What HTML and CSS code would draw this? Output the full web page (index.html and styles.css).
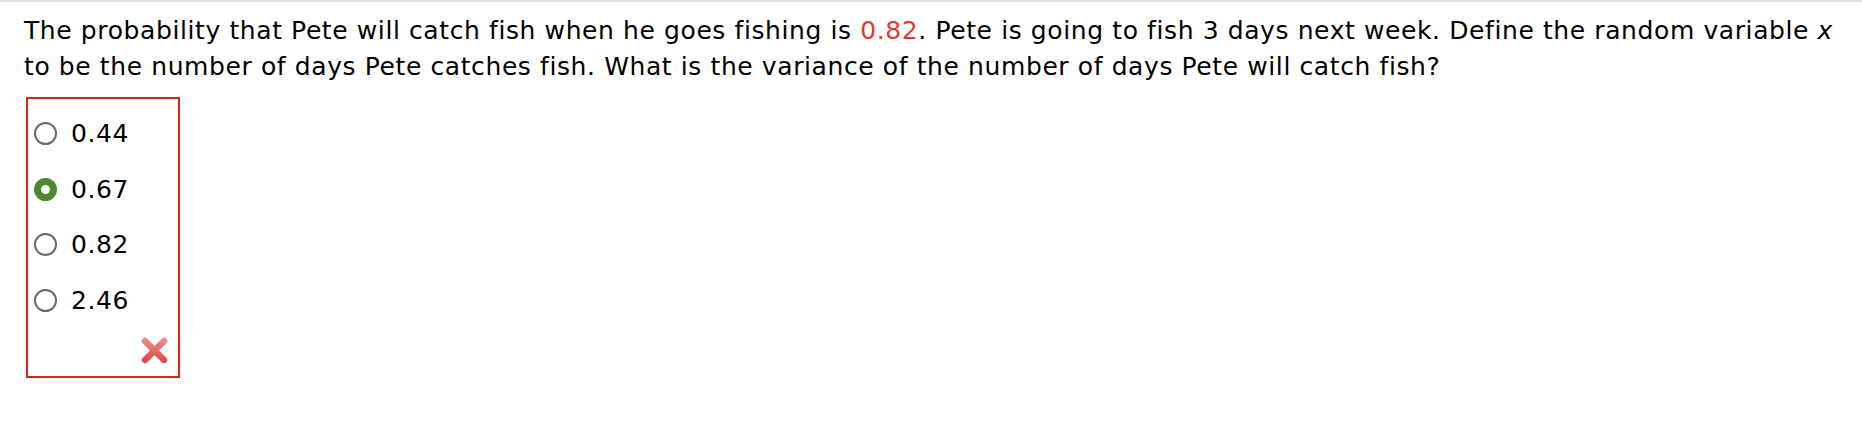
FILE: index.html
```html
<!DOCTYPE html>
<html>
<head>
<meta charset="utf-8">
<link rel="stylesheet" href="styles.css">
</head>
<body>
<div class="page">
  <p class="question">The probability that Pete will catch fish when he goes fishing is <span class="given">0.82</span>. Pete is going to fish 3 days next week. Define the random variable <i class="var">x</i> to be the number of days Pete catches fish. What is the variance of the number of days Pete will catch fish?</p>
  <div class="answers">
    <div class="option"><span class="radio"></span><span class="label">0.44</span></div>
    <div class="option"><span class="radio checked"></span><span class="label">0.67</span></div>
    <div class="option"><span class="radio"></span><span class="label">0.82</span></div>
    <div class="option"><span class="radio"></span><span class="label">2.46</span></div>
    <div class="mark">
      <svg width="27" height="27" viewBox="0 0 27 27">
        <defs>
          <linearGradient id="xg" x1="0" y1="0" x2="0" y2="1">
            <stop offset="0" stop-color="#f07a7a"/>
            <stop offset="1" stop-color="#d93b3b"/>
          </linearGradient>
        </defs>
        <path d="M4 4 L23 23 M23 4 L4 23" stroke="url(#xg)" stroke-width="6.5" stroke-linecap="round" opacity="0.9"/>
      </svg>
    </div>
  </div>
</div>
</body>
</html>
```

FILE: styles.css
```css
html, body {
  margin: 0;
  padding: 0;
  background: #ffffff;
}
.page {
  border-top: 2px solid #dedede;
  font-family: "DejaVu Sans", Verdana, sans-serif;
  color: #000;
}
.question {
  margin: 11px 0 0 24px;
  width: 1820px;
  font-size: 25px;
  letter-spacing: 0.6px;
  line-height: 36px;
}
.given {
  color: #e8372b;
}
.var {
  font-style: italic;
}
.answers {
  margin: 12px 0 0 26px;
  width: 150px;
  border: 2px solid #d2281c;
  padding: 7px 0 12px 0;
  box-sizing: content-box;
}
.option {
  height: 55.6px;
  display: flex;
  align-items: center;
  padding-left: 6px;
}
.radio {
  width: 19px;
  height: 19px;
  border: 2px solid #6a6a6a;
  border-radius: 50%;
  background: #fff;
  flex: none;
}
.radio.checked {
  width: 9px;
  height: 9px;
  border: 7px solid #4c8a30;
  background: #ffffff;
}
.label {
  margin-left: 14px;
  font-size: 25px;
  letter-spacing: 0.6px;
}
.mark {
  display: flex;
  justify-content: flex-end;
  padding: 9px 10px 0 0;
  height: 27px;
}
.mark svg {
  display: block;
  filter: blur(0.6px);
}
```
